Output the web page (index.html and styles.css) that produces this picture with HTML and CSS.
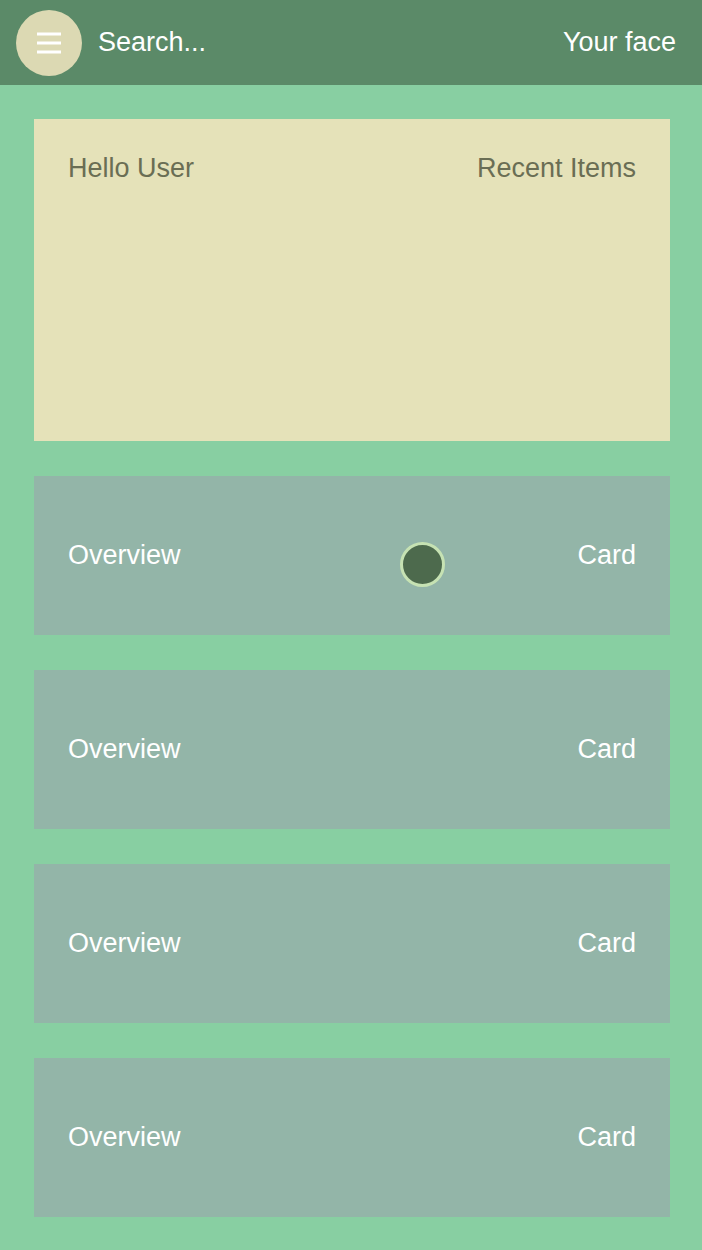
FILE: index.html
```html
<!DOCTYPE html>
<html>
<head>
<meta charset="utf-8">
<link rel="stylesheet" href="styles.css">
</head>
<body>
<header class="topbar">
  <button class="menu-btn" aria-label="Menu">
    <svg width="26" height="22" viewBox="0 0 26 22"><path d="M1 2h24M1 11h24M1 20h24" stroke="#fff" stroke-width="3"/></svg>
  </button>
  <span class="search">Search...</span>
  <span class="user">Your face</span>
</header>
<main class="content">
  <section class="card hero">
    <span>Hello User</span>
    <span>Recent Items</span>
  </section>
  <section class="card row">
    <span>Overview</span>
    <span>Card</span>
    <span class="dot"></span>
  </section>
  <section class="card row">
    <span>Overview</span>
    <span>Card</span>
  </section>
  <section class="card row">
    <span>Overview</span>
    <span>Card</span>
  </section>
  <section class="card row">
    <span>Overview</span>
    <span>Card</span>
  </section>
</main>
</body>
</html>
```

FILE: styles.css
```css
* { box-sizing: border-box; }
html, body { margin: 0; padding: 0; }
body {
  background: #88cfa2;
  font-family: "Liberation Sans", Arial, sans-serif;
  font-size: 27px;
  width: 702px;
  height: 1250px;
  overflow: hidden;
}
.topbar {
  height: 85px;
  background: #5b8a68;
  display: flex;
  align-items: center;
  padding: 0 26px 0 16px;
  color: #fff;
}
.menu-btn {
  width: 66px;
  height: 66px;
  border-radius: 50%;
  border: none;
  background: #dcd9b3;
  display: flex;
  align-items: center;
  justify-content: center;
  padding: 0;
  margin-right: 16px;
}
.search { flex: 1; }
.content {
  display: flex;
  flex-direction: column;
  gap: 35px;
  padding: 34px 32px 34px 34px;
}
.card {
  display: flex;
  justify-content: space-between;
  padding: 0 34px;
  position: relative;
}
.hero {
  height: 322px;
  background: #e5e2b9;
  color: #6a6e54;
  padding-top: 34px;
  align-items: flex-start;
}
.row {
  height: 159px;
  background: #93b5a8;
  color: #fff;
  align-items: center;
}
.dot {
  position: absolute;
  left: 366px;
  top: 66px;
  width: 45px;
  height: 45px;
  border-radius: 50%;
  background: #4d6a4d;
  border: 3px solid #c6e2b3;
}
```
